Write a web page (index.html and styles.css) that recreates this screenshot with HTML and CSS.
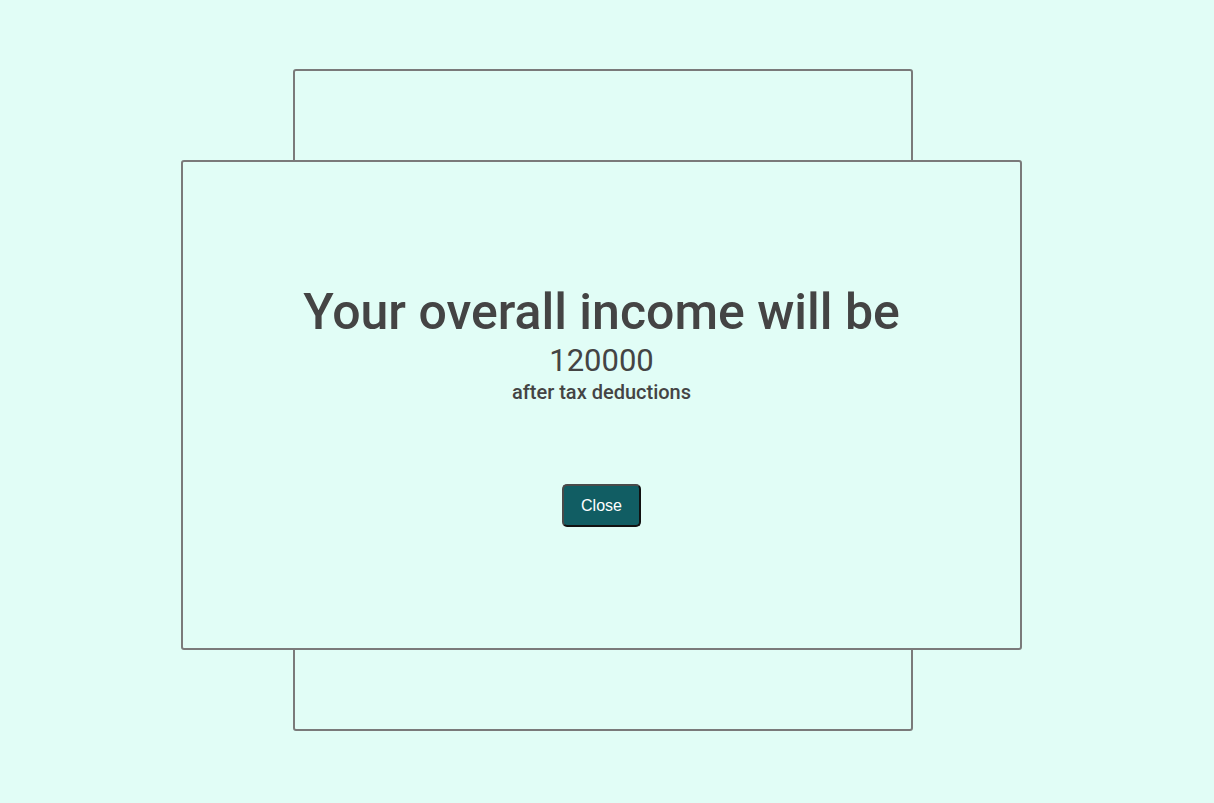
FILE: index.html
```html
<!DOCTYPE html>
<html lang="en">
<head>
<meta charset="utf-8">
<title>Income</title>
<link rel="stylesheet" href="styles.css">
</head>
<body>
<div class="stage">
  <div class="back-card"></div>
  <div class="modal">
    <h1 class="title">Your overall income will be</h1>
    <div class="amount">120000</div>
    <div class="note">after tax deductions</div>
    <button class="close-btn" type="button">Close</button>
  </div>
</div>
</body>
</html>
```
FILE: styles.css
```css
html, body {
  margin: 0;
  padding: 0;
  background: #e1fdf6;
  height: 100%;
}
body {
  font-family: Roboto, "Liberation Sans", sans-serif;
  color: #444444;
}
.stage {
  display: grid;
  grid-template-columns: 1fr;
  grid-template-rows: auto;
  height: 803px;
  box-sizing: border-box;
}
.back-card, .modal {
  grid-area: 1 / 1;
  box-sizing: border-box;
  border: 2px solid #7a7a7a;
  border-radius: 3px;
  background: #e1fdf6;
}
.back-card {
  justify-self: start;
  align-self: start;
  margin-left: 293px;
  margin-top: 69px;
  width: 620px;
  height: 662px;
}
.modal {
  justify-self: start;
  align-self: start;
  margin-left: 181px;
  margin-top: 160px;
  width: 841px;
  height: 490px;
  display: flex;
  flex-direction: column;
  align-items: center;
  padding-top: 121px;
}
.title {
  margin: 0;
  font-size: 50px;
  font-weight: 500;
  line-height: 58px;
}
.amount {
  font-size: 31px;
  font-weight: 400;
  line-height: 36px;
  margin-top: 2px;
}
.note {
  font-size: 20px;
  font-weight: 500;
  line-height: 24px;
  margin-top: 1px;
}
.close-btn {
  margin-top: 80px;
  width: 79px;
  height: 43px;
  background: #115d63;
  color: #ffffff;
  font-family: "Liberation Sans", Arial, sans-serif;
  font-size: 16px;
  border: 2px solid;
  border-color: #4a4a4a #111111 #111111 #4a4a4a;
  border-radius: 5px;
  cursor: pointer;
}
```
